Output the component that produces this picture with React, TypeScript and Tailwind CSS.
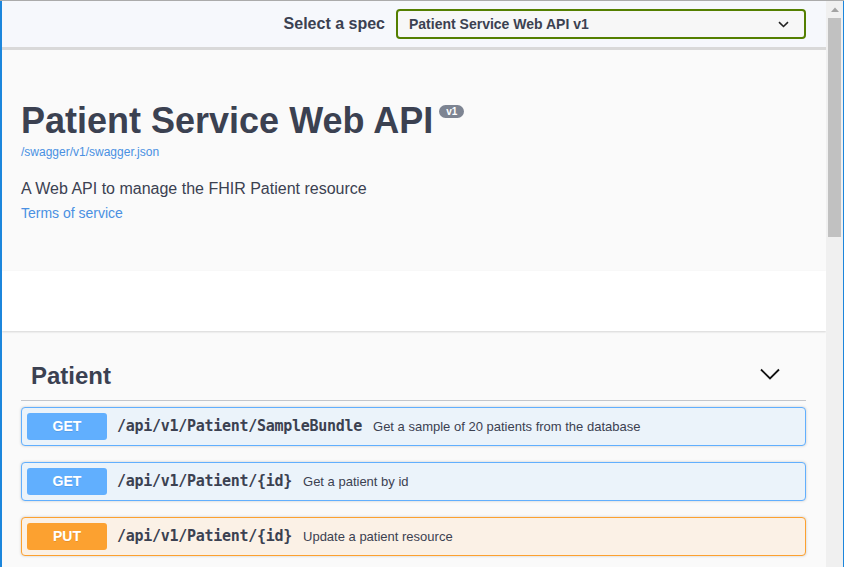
import React from "react";

const ops = [
  { method: "GET", path: "/api/v1/Patient/SampleBundle", summary: "Get a sample of 20 patients from the database", kind: "get" },
  { method: "GET", path: "/api/v1/Patient/{id}", summary: "Get a patient by id", kind: "get" },
  { method: "PUT", path: "/api/v1/Patient/{id}", summary: "Update a patient resource", kind: "put" },
];

function OpBlock({ method, path, summary, kind }: { method: string; path: string; summary: string; kind: string }) {
  const isGet = kind === "get";
  return (
    <div
      className={
        isGet
          ? "mb-[16px] flex h-[39px] shrink-0 items-center rounded-[4px] border border-[#61affe] bg-[#ebf3fa] px-[5px] shadow-[0_0_3px_rgba(0,0,0,0.19)]"
          : "mb-[16px] flex h-[39px] shrink-0 items-center rounded-[4px] border border-[#fca130] bg-[#fbf1e6] px-[5px] shadow-[0_0_3px_rgba(0,0,0,0.19)]"
      }
    >
      <div
        className={
          isGet
            ? "flex h-[27px] w-[80px] items-center justify-center rounded-[3px] bg-[#61affe] text-[14px] font-bold text-white [text-shadow:0_1px_0_rgba(0,0,0,0.1)]"
            : "flex h-[27px] w-[80px] items-center justify-center rounded-[3px] bg-[#fca130] text-[14px] font-bold text-white [text-shadow:0_1px_0_rgba(0,0,0,0.1)]"
        }
      >
        {method}
      </div>
      <span className="px-[10px] font-['DejaVu_Sans_Mono',monospace] text-[15px] font-bold tracking-[-0.28px] text-[#3b4151]">
        {path}
      </span>
      <span className="pl-[1px] text-[13px] text-[#3b4151]">{summary}</span>
    </div>
  );
}

export default function App() {
  return (
    <div className="flex h-[567px] w-[844px] flex-col overflow-hidden border-t border-[#ababab] font-['Liberation_Sans',Arial,sans-serif] text-[#3b4151]">
      <div className="flex min-h-0 flex-1 border-l-2 border-r border-l-[#1c86dc] border-r-[#1c86dc]">
        <div className="flex min-w-0 flex-1 flex-col overflow-hidden bg-[#fafafa]">
          {/* Top bar */}
          <div className="flex h-[46px] shrink-0 items-center justify-end bg-[#f6f8fc] pr-[20px]">
            <span className="mr-[11px] text-[16px] font-bold text-[#3b4151]">Select a spec</span>
            <div className="flex h-[30px] w-[410px] items-center justify-between rounded-[4px] border-2 border-[#547f00] bg-[#f7f7f7] pl-[11px] pr-[15px]">
              <span className="text-[14px] font-bold text-[#3b4151]">Patient Service Web API v1</span>
              <svg width="11" height="7" viewBox="0 0 11 7" fill="none">
                <path d="M1 1.2 L5.5 5.5 L10 1.2" stroke="#222" strokeWidth="1.6" />
              </svg>
            </div>
          </div>
          <div className="h-[3px] shrink-0 bg-[#d9d9d9]" />

          {/* Info */}
          <div className="h-[221px] shrink-0 bg-[#fafafa] pl-[19px] pt-[53px]">
            <div className="flex items-start">
              <h2 className="text-[36px] font-bold leading-[36px] text-[#3b4151]">Patient Service Web API</h2>
              <span className="ml-[6px] mt-[2px] h-[13px] rounded-[57px] bg-[#7d8492] px-[7px] text-[10px] font-bold leading-[13px] text-white">
                v1
              </span>
            </div>
            <div className="mt-[5px] text-[12px] leading-[16px] text-[#4990e2]">/swagger/v1/swagger.json</div>
            <div className="mt-[19px] text-[16px] leading-[20px] text-[#3b4151]">A Web API to manage the FHIR Patient resource</div>
            <div className="mt-[4px] text-[14px] leading-[20px] text-[#4990e2]">Terms of service</div>
          </div>

          {/* Scheme container */}
          <div className="relative h-[60px] shrink-0 bg-white shadow-[0_1px_2px_0_rgba(0,0,0,0.15)]" />

          {/* Tag section */}
          <div className="shrink-0 pl-[19px] pr-[20px] pt-[30px]">
            <div className="flex items-center justify-between border-b border-[#c4c6cb] pb-[9px] pl-[10px] pr-[26px]">
              <h3 className="text-[24px] font-bold leading-[30px] text-[#3b4151]">Patient</h3>
              <svg width="20" height="20" viewBox="0 0 20 20" fill="none">
                <path d="M1 3.5 L10 12.5 L19 3.5" stroke="#111" strokeWidth="1.8" />
              </svg>
            </div>
            <div className="mt-[6px]">
              {ops.map((o, i) => (
                <OpBlock key={i} {...o} />
              ))}
            </div>
          </div>
        </div>

        {/* Scrollbar */}
        <div className="flex w-[17px] shrink-0 flex-col bg-[#f0f0f0]">
          <div className="flex h-[17px] shrink-0 items-start justify-center pt-[6px]">
            <svg width="8" height="5" viewBox="0 0 8 5">
              <path d="M0 5 L4 0.5 L8 5 Z" fill="#a3a3a3" />
            </svg>
          </div>
          <div className="mx-[2px] h-[219px] shrink-0 bg-[#c1c1c1]" />
        </div>
      </div>
    </div>
  );
}
